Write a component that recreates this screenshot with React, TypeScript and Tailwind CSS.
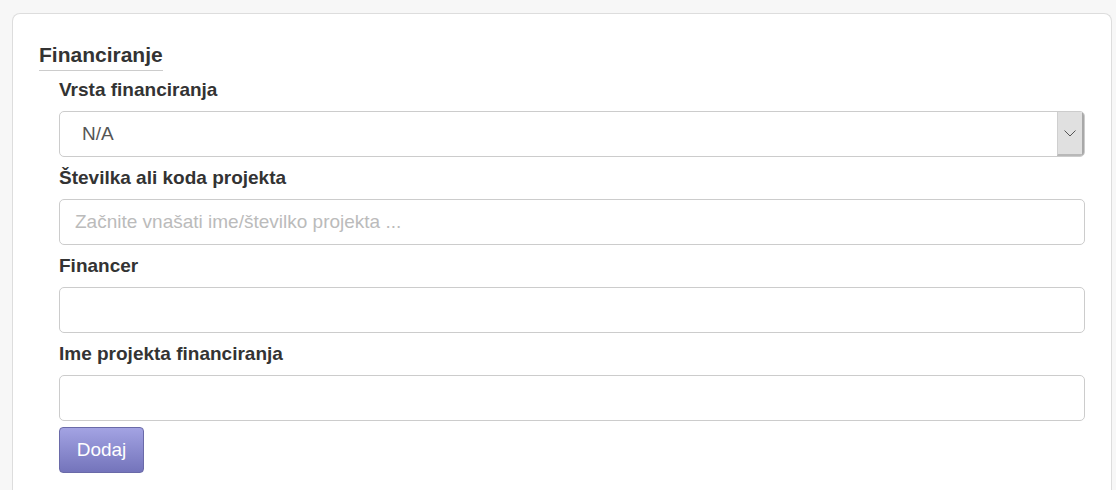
const fields = [
  { label: 'Številka ali koda projekta', placeholder: 'Začnite vnašati ime/številko projekta ...' },
  { label: 'Financer', placeholder: '' },
  { label: 'Ime projekta financiranja', placeholder: '' },
];

function Label({ children }: { children: string }) {
  return <label className="block text-[19px] font-bold leading-[20px] text-[#333] mb-[11px]">{children}</label>;
}

export default function App() {
  return (
    <div className="min-h-screen bg-[#f7f7f7] pt-[13px] pl-[12px] pr-[4px] font-['Liberation_Sans',Arial,sans-serif]">
      <div className="bg-white border border-[#dddddd] rounded-t-[8px] border-b-0 h-[480px] pl-[26px] pr-[26px] pt-[29px]">
        <h2 className="inline-block text-[21px] font-bold leading-[24px] text-[#333] border-b border-[#cccccc] pb-[3px]">
          Financiranje
        </h2>
        <div className="pl-[20px] mt-[9px]">
          <div className="flex flex-col gap-[11px]">
            <div>
              <Label>Vrsta financiranja</Label>
              <div className="flex h-[46px] mt-[1px] border border-[#cccccc] rounded-[5px] overflow-hidden">
                <div className="flex-1 flex items-center pl-[22px] text-[19px] text-[#555]">N/A</div>
                <div className="w-[27px] flex items-center justify-center bg-[#e0e0e0] border-l border-[#cfcfcf] border-r-2 border-b-2 border-r-[#a8a8a8] border-b-[#b8b8b8]">
                  <svg width="12" height="7" viewBox="0 0 12 7" fill="none">
                    <polyline points="0.5,0.5 6,6 11.5,0.5" stroke="#555" strokeWidth="1" />
                  </svg>
                </div>
              </div>
            </div>
            {fields.map((f) => (
              <div key={f.label}>
                <Label>{f.label}</Label>
                <input
                  className="w-full h-[46px] border border-[#cccccc] rounded-[5px] px-[15px] text-[19px] text-[#555] placeholder:text-[#bbbbbb] outline-none"
                  placeholder={f.placeholder}
                />
              </div>
            ))}
          </div>
          <button className="mt-[6px] h-[46px] w-[85px] rounded-[4px] border border-[#6a6aa8] bg-gradient-to-b from-[#a3a3e3] to-[#7474bb] text-white text-[19px]">
            Dodaj
          </button>
        </div>
      </div>
    </div>
  );
}
